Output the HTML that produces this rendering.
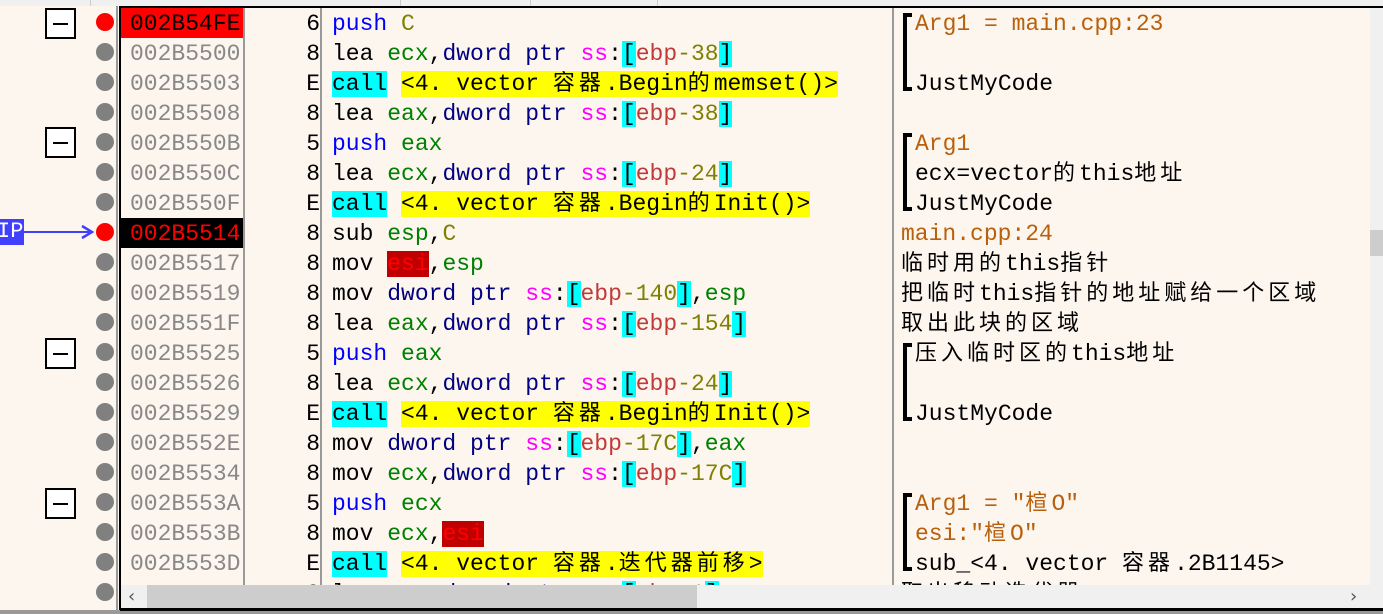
<!DOCTYPE html>
<html><head><meta charset="utf-8"><style>
*{margin:0;padding:0;box-sizing:border-box}
body{width:1383px;height:614px;overflow:hidden;background:#fdf6ef;position:relative;font-family:"Liberation Mono","Noto Sans CJK SC",monospace;font-size:23px}
.a{position:absolute}
.sh{position:absolute;left:0;top:2px;width:1383px;height:0}
.row{position:absolute;height:30px;line-height:30px;white-space:pre}
.w{font-family:"Noto Sans CJK SC",sans-serif;letter-spacing:4px;font-size:22px;line-height:1}
.k{color:#000}.p{color:#0000ff}.r{color:#008000}.n{color:#000080}.s{color:#ff00ff}.b{background:#00ffff;color:#000}.e{color:#c03a3a}.o{color:#808000}.y{background:#ffff00;color:#000}.c{background:#00ffff}
.esi{background:#c00000;color:#ff0000}
.or{color:#b8600c}
.dot{position:absolute;left:96px;width:18px;height:18px;border-radius:50%;background:#808080}
.box{position:absolute;left:45px;width:31px;height:31px;border:2px solid #000;background:#fff}
.box:after{content:"";position:absolute;left:6px;right:6px;top:13px;height:2px;background:#000}
.addr{position:absolute;left:121px;width:122px;height:30px;line-height:30px;padding-left:9px;color:#888}
.by{position:absolute;left:300px;width:20px;text-align:right;height:30px;line-height:30px}
.br{position:absolute;left:903px;width:4px;background:#000}
.br:before,.br:after{content:"";position:absolute;left:0;width:9px;height:4px;background:#000}
.br:before{top:0}.br:after{bottom:0}
</style></head><body>
<div class="a" style="left:0;top:0;width:1383px;height:6px;background:#f0f0f0"></div>
<div class="a" style="left:90px;top:0;width:1px;height:6px;background:#ccc"></div>
<div class="a" style="left:400px;top:0;width:1px;height:6px;background:#ccc"></div>
<div class="a" style="left:530px;top:0;width:1px;height:6px;background:#ccc"></div>
<div class="a" style="left:657px;top:0;width:1px;height:6px;background:#ccc"></div>
<div class="a" style="left:120px;top:6px;width:1263px;height:2px;background:#000"></div>
<div class="a" style="left:116px;top:6px;width:2px;height:604px;background:#999"></div>
<div class="a" style="left:119px;top:6px;width:2px;height:604px;background:#000"></div>
<div class="a" style="left:243px;top:8px;width:2px;height:577px;background:#999"></div>
<div class="a" style="left:320px;top:8px;width:2px;height:577px;background:#999"></div>
<div class="a" style="left:892px;top:8px;width:2px;height:577px;background:#999"></div>
<div class="a" style="left:0;top:610px;width:1383px;height:4px;background:#999"></div>
<div class="a" style="left:120px;top:608px;width:1263px;height:3px;background:#000"></div>

<div class="a" style="left:121px;top:8px;width:122px;height:30px;background:#ff0000"></div>
<div class="a" style="left:121px;top:218px;width:122px;height:30px;background:#000"></div>

<div class="box" style="top:8px"></div><div class="box" style="top:127px"></div><div class="box" style="top:338px"></div><div class="box" style="top:488px"></div>
<div class="dot" style="top:13px;background:#ff0000"></div>
<div class="dot" style="top:43px"></div><div class="dot" style="top:73px"></div><div class="dot" style="top:103px"></div><div class="dot" style="top:133px"></div><div class="dot" style="top:163px"></div><div class="dot" style="top:193px"></div>
<div class="dot" style="top:223px;background:#ff0000"></div>
<div class="dot" style="top:253px"></div><div class="dot" style="top:283px"></div><div class="dot" style="top:313px"></div><div class="dot" style="top:343px"></div><div class="dot" style="top:373px"></div><div class="dot" style="top:403px"></div><div class="dot" style="top:433px"></div><div class="dot" style="top:463px"></div><div class="dot" style="top:493px"></div><div class="dot" style="top:523px"></div><div class="dot" style="top:553px"></div><div class="dot" style="top:583px"></div>
<div class="a" style="left:0;top:219px;width:24px;height:26px;background:#4040ff;color:#fff;line-height:26px;font-size:22px;text-indent:-3px;overflow:hidden">IP</div>
<div class="a" style="left:24px;top:231px;width:66px;height:2px;background:#4040ff"></div>
<svg class="a" style="left:80px;top:224px" width="16" height="16"><path d="M2 2 L12 8 L2 14" stroke="#4040ff" stroke-width="2.5" fill="none"/></svg>

<div class="sh">
<div class="addr" style="top:7px;color:#000">002B54FE</div>
<div class="addr" style="top:37px">002B5500</div>
<div class="addr" style="top:67px">002B5503</div>
<div class="addr" style="top:97px">002B5508</div>
<div class="addr" style="top:127px">002B550B</div>
<div class="addr" style="top:157px">002B550C</div>
<div class="addr" style="top:187px">002B550F</div>
<div class="addr" style="top:217px;color:#ff0000">002B5514</div>
<div class="addr" style="top:247px">002B5517</div>
<div class="addr" style="top:277px">002B5519</div>
<div class="addr" style="top:307px">002B551F</div>
<div class="addr" style="top:337px">002B5525</div>
<div class="addr" style="top:367px">002B5526</div>
<div class="addr" style="top:397px">002B5529</div>
<div class="addr" style="top:427px">002B552E</div>
<div class="addr" style="top:457px">002B5534</div>
<div class="addr" style="top:487px">002B553A</div>
<div class="addr" style="top:517px">002B553B</div>
<div class="addr" style="top:547px">002B553D</div>

<div class="by" style="top:7px">6</div><div class="by" style="top:37px">8</div><div class="by" style="top:67px">E</div><div class="by" style="top:97px">8</div><div class="by" style="top:127px">5</div><div class="by" style="top:157px">8</div><div class="by" style="top:187px">E</div><div class="by" style="top:217px">8</div><div class="by" style="top:247px">8</div><div class="by" style="top:277px">8</div><div class="by" style="top:307px">8</div><div class="by" style="top:337px">5</div><div class="by" style="top:367px">8</div><div class="by" style="top:397px">E</div><div class="by" style="top:427px">8</div><div class="by" style="top:457px">8</div><div class="by" style="top:487px">5</div><div class="by" style="top:517px">8</div><div class="by" style="top:547px">E</div><div class="by" style="top:577px">8</div>

<div class="row" style="left:332px;top:7px"><span class="p">push</span> <span class="o">C</span></div>
<div class="row" style="left:332px;top:37px">lea <span class="r">ecx</span>,<span class="n">dword ptr</span> <span class="s">ss</span>:<span class="b">[</span><span class="e">ebp</span><span class="o">-38</span><span class="b">]</span></div>
<div class="row" style="left:332px;top:67px"><span class="b">call</span> <span class="y">&lt;4. vector <span class="w">容器</span>.Begin<span class="w">的</span>memset()&gt;</span></div>
<div class="row" style="left:332px;top:97px">lea <span class="r">eax</span>,<span class="n">dword ptr</span> <span class="s">ss</span>:<span class="b">[</span><span class="e">ebp</span><span class="o">-38</span><span class="b">]</span></div>
<div class="row" style="left:332px;top:127px"><span class="p">push</span> <span class="r">eax</span></div>
<div class="row" style="left:332px;top:157px">lea <span class="r">ecx</span>,<span class="n">dword ptr</span> <span class="s">ss</span>:<span class="b">[</span><span class="e">ebp</span><span class="o">-24</span><span class="b">]</span></div>
<div class="row" style="left:332px;top:187px"><span class="b">call</span> <span class="y">&lt;4. vector <span class="w">容器</span>.Begin<span class="w">的</span>Init()&gt;</span></div>
<div class="row" style="left:332px;top:217px">sub <span class="r">esp</span>,<span class="o">C</span></div>
<div class="row" style="left:332px;top:247px">mov <span class="esi">esi</span>,<span class="r">esp</span></div>
<div class="row" style="left:332px;top:277px">mov <span class="n">dword ptr</span> <span class="s">ss</span>:<span class="b">[</span><span class="e">ebp</span><span class="o">-140</span><span class="b">]</span>,<span class="r">esp</span></div>
<div class="row" style="left:332px;top:307px">lea <span class="r">eax</span>,<span class="n">dword ptr</span> <span class="s">ss</span>:<span class="b">[</span><span class="e">ebp</span><span class="o">-154</span><span class="b">]</span></div>
<div class="row" style="left:332px;top:337px"><span class="p">push</span> <span class="r">eax</span></div>
<div class="row" style="left:332px;top:367px">lea <span class="r">ecx</span>,<span class="n">dword ptr</span> <span class="s">ss</span>:<span class="b">[</span><span class="e">ebp</span><span class="o">-24</span><span class="b">]</span></div>
<div class="row" style="left:332px;top:397px"><span class="b">call</span> <span class="y">&lt;4. vector <span class="w">容器</span>.Begin<span class="w">的</span>Init()&gt;</span></div>
<div class="row" style="left:332px;top:427px">mov <span class="n">dword ptr</span> <span class="s">ss</span>:<span class="b">[</span><span class="e">ebp</span><span class="o">-17C</span><span class="b">]</span>,<span class="r">eax</span></div>
<div class="row" style="left:332px;top:457px">mov <span class="r">ecx</span>,<span class="n">dword ptr</span> <span class="s">ss</span>:<span class="b">[</span><span class="e">ebp</span><span class="o">-17C</span><span class="b">]</span></div>
<div class="row" style="left:332px;top:487px"><span class="p">push</span> <span class="r">ecx</span></div>
<div class="row" style="left:332px;top:517px">mov <span class="r">ecx</span>,<span class="esi">esi</span></div>
<div class="row" style="left:332px;top:547px"><span class="b">call</span> <span class="y">&lt;4. vector <span class="w">容器</span>.<span class="w">迭代器前移</span>&gt;</span></div>
<div class="row" style="left:332px;top:577px">lea <span class="r">ecx</span>,<span class="n">dword ptr</span> <span class="s">ss</span>:<span class="b">[</span><span class="e">ebp</span><span class="o">-1</span><span class="b">]</span></div>

<div class="row or" style="left:915px;top:7px">Arg1 = main.cpp:23</div>
<div class="row" style="left:915px;top:67px">JustMyCode</div>
<div class="row or" style="left:915px;top:127px">Arg1</div>
<div class="row" style="left:915px;top:157px">ecx=vector<span class="w">的</span>this<span class="w">地址</span></div>
<div class="row" style="left:915px;top:187px">JustMyCode</div>
<div class="row or" style="left:901px;top:217px">main.cpp:24</div>
<div class="row" style="left:901px;top:247px"><span class="w">临时用的</span>this<span class="w">指针</span></div>
<div class="row" style="left:901px;top:277px"><span class="w">把临时</span>this<span class="w">指针的地址赋给一个区域</span></div>
<div class="row" style="left:901px;top:307px"><span class="w">取出此块的区域</span></div>
<div class="row" style="left:915px;top:337px"><span class="w">压入临时区的</span>this<span class="w">地址</span></div>
<div class="row" style="left:915px;top:397px">JustMyCode</div>
<div class="row or" style="left:915px;top:487px">Arg1 = "<span class="w">楦</span>O"</div>
<div class="row or" style="left:915px;top:517px">esi:"<span class="w">楦</span>O"</div>
<div class="row" style="left:915px;top:547px">sub_&lt;4. vector <span class="w">容器</span>.2B1145&gt;</div>
<div class="row" style="left:901px;top:577px"><span class="w">取出移动迭代器</span></div>
</div>

<div class="br" style="top:13px;height:78px"></div>
<div class="br" style="top:133px;height:78px"></div>
<div class="br" style="top:343px;height:78px"></div>
<div class="br" style="top:493px;height:78px"></div>

<div class="a" style="left:1370px;top:8px;width:13px;height:577px;background:#f0f0f0"></div>
<div class="a" style="left:1370px;top:230px;width:13px;height:26px;background:#cdcdcd"></div>
<div class="a" style="left:121px;top:585px;width:1262px;height:23px;background:#f0f0f0"></div>
<div class="a" style="left:147px;top:585px;width:550px;height:23px;background:#cdcdcd"></div>
<div class="a" style="left:128px;top:586px;font-size:18px;color:#555;font-family:'DejaVu Sans'">&#x2039;</div>
<div class="a" style="left:1350px;top:586px;font-size:18px;color:#555;font-family:'DejaVu Sans'">&#x203A;</div>
</body></html>
